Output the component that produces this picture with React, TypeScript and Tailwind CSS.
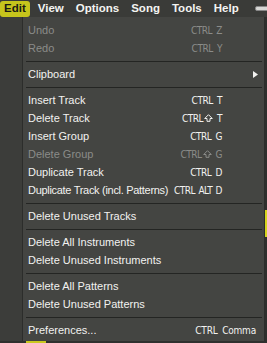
import {FC} from 'react';

type Item =
  | {kind: 'sep'}
  | {
      kind: 'item';
      label: string;
      shortcut?: string;
      shift?: boolean;
      disabled?: boolean;
      submenu?: boolean;
      wide?: boolean;
      tight?: boolean;
    };

const items: Item[] = [
  {kind: 'item', label: 'Undo', shortcut: 'CTRL Z', disabled: true},
  {kind: 'item', label: 'Redo', shortcut: 'CTRL Y', disabled: true},
  {kind: 'sep'},
  {kind: 'item', label: 'Clipboard', submenu: true},
  {kind: 'sep'},
  {kind: 'item', label: 'Insert Track', shortcut: 'CTRL T'},
  {kind: 'item', label: 'Delete Track', shortcut: 'T', shift: true},
  {kind: 'item', label: 'Insert Group', shortcut: 'CTRL G'},
  {kind: 'item', label: 'Delete Group', shortcut: 'G', shift: true, disabled: true},
  {kind: 'item', label: 'Duplicate Track', shortcut: 'CTRL D'},
  {kind: 'item', label: 'Duplicate Track (incl. Patterns)', shortcut: 'CTRL ALT D', tight: true},
  {kind: 'sep'},
  {kind: 'item', label: 'Delete Unused Tracks'},
  {kind: 'sep'},
  {kind: 'item', label: 'Delete All Instruments'},
  {kind: 'item', label: 'Delete Unused Instruments'},
  {kind: 'sep'},
  {kind: 'item', label: 'Delete All Patterns'},
  {kind: 'item', label: 'Delete Unused Patterns'},
  {kind: 'sep'},
  {kind: 'item', label: 'Preferences...', shortcut: 'CTRL Comma', wide: true},
];

const menus = ['Edit', 'View', 'Options', 'Song', 'Tools', 'Help'];

const ShiftArrow: FC<{color: string}> = ({color}) => (
  <svg className="mx-[1px]" width="9" height="8" viewBox="0 0 9 8">
    <path d="M4.5 0.7 L8.3 4.5 L6 4.5 L6 7.3 L3 7.3 L3 4.5 L0.7 4.5 Z" fill="none" stroke={color} strokeWidth="1" />
  </svg>
);

const MenuRow: FC<{item: Item}> = ({item}) => {
  if (item.kind === 'sep') {
    return (
      <div className="pb-[3px] pl-[3px] pr-[2px] pt-[4px]">
        <div className="h-px bg-[#242523]" />
      </div>
    );
  }
  const color = item.disabled ? 'text-[#8b8c89]' : 'text-[#f2f2f0]';
  return (
    <div className={`flex h-[18px] items-center pl-[5px] text-[11px] ${color}`}>
      <span className={`flex-1 whitespace-nowrap ${item.tight ? 'tracking-[-0.3px]' : ''}`}>{item.label}</span>
      {item.shortcut && (
        <span
          className={`flex shrink-0 items-center whitespace-nowrap font-['DejaVu_Sans_Condensed','DejaVu_Sans',sans-serif] text-[10px] ${
            item.tight ? '[word-spacing:1px]' : '[word-spacing:2px]'
          } ${item.wide ? 'pr-[8px] tracking-[-0.2px]' : 'pr-[42px] tracking-[-0.5px]'}`}>
          {item.shift ? (
            <>
              CTRL
              <ShiftArrow color={item.disabled ? '#8b8c89' : '#f2f2f0'} />
              <span className="ml-[3px]">{item.shortcut}</span>
            </>
          ) : (
            item.shortcut
          )}
        </span>
      )}
      {item.submenu && (
        <svg className="mr-[6px]" width="5" height="7" viewBox="0 0 5 7">
          <path d="M0 0 L5 3.5 L0 7 Z" fill="#f2f2f0" />
        </svg>
      )}
    </div>
  );
};

export default function App() {
  return (
    <div className="flex h-[343px] w-[267px] flex-col overflow-hidden bg-[#3b3c39] font-['Liberation_Sans',Arial,sans-serif]">
      <div className="flex h-[17px] items-center gap-[4px] bg-[#3a3b38]">
        {menus.map((m, i) => (
          <div
            key={m}
            className={`flex h-[16px] items-center rounded-[3px] px-[4px] text-[11.5px] font-bold ${
              i === 0 ? 'bg-[#c6c51c] text-[#1a1a14]' : 'text-[#f4f4f2]'
            }`}>
            {m}
          </div>
        ))}
        <div className="ml-auto mr-[-2px] h-[5px] w-[14px] rounded-[2px] border border-[#888] bg-[#d8d8d6]" />
      </div>
      <div className="flex">
        <div className="w-[22px] bg-[#3c3d3a]" />
        <div className="flex w-[243px] flex-col border-x border-[#2c2d2b] bg-[#444542] pb-[2px] pt-[4px]">
          {items.map((item, i) => (
            <MenuRow key={i} item={item} />
          ))}
        </div>
        <div className="flex flex-1 flex-col bg-[#2e2f2d]">
          <div className="mt-[193px] h-[27px] bg-[#d4d41e]" />
        </div>
      </div>
      <div className="flex flex-1 bg-[#2f302e]">
        <div className="ml-[26px] w-[20px] bg-[#c9c81e]" />
      </div>
    </div>
  );
}
